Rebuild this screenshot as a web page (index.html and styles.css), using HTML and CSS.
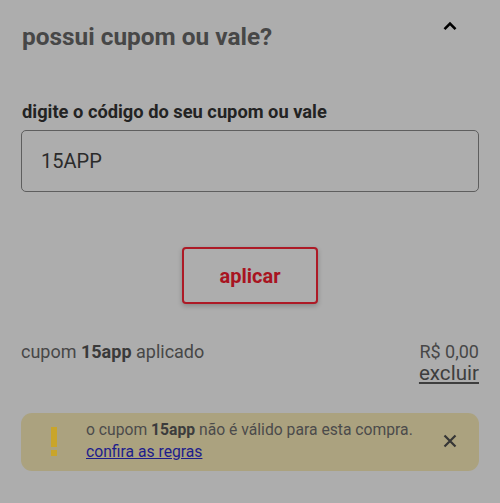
FILE: index.html
```html
<!DOCTYPE html>
<html lang="pt-BR">
<head>
<meta charset="utf-8">
<title>cupom</title>
<link rel="stylesheet" href="styles.css">
</head>
<body>
<div class="page">
  <div class="header">
    <h2 class="title">possui cupom ou vale?</h2>
    <svg class="chevron" width="14" height="10" viewBox="0 0 14 10"><polyline points="1.5,8.2 7,2.7 12.5,8.2" fill="none" stroke="#000" stroke-width="2.6"/></svg>
  </div>
  <label class="label" for="code">digite o código do seu cupom ou vale</label>
  <input class="field" id="code" type="text" value="15APP">
  <div class="btn-row">
    <button class="apply">aplicar</button>
  </div>
  <div class="applied">
    <div class="applied-text">cupom <b>15app</b> aplicado</div>
    <div class="applied-side">
      <div class="price">R$ 0,00</div>
      <a class="remove" href="#">excluir</a>
    </div>
  </div>
  <div class="alert">
    <svg class="bang" width="6" height="30" viewBox="0 0 6 30"><rect x="0" y="0" width="6" height="20" fill="#c9a52b"/><rect x="0" y="23" width="6" height="6" fill="#c9a52b"/></svg>
    <div class="alert-text">
      <div>o cupom <b>15app</b> não é válido para esta compra.</div>
      <a class="rules" href="#">confira as regras</a>
    </div>
    <svg class="close" width="14" height="14" viewBox="0 0 14 14"><path d="M1.5 1.5 L12.5 12.5 M12.5 1.5 L1.5 12.5" stroke="#363636" stroke-width="2.2" fill="none"/></svg>
  </div>
</div>
</body>
</html>
```
FILE: styles.css
```css
html, body {
  margin: 0;
  padding: 0;
  background: #adadad;
}
body {
  font-family: Roboto, "Liberation Sans", sans-serif;
  width: 500px;
  height: 503px;
  overflow: hidden;
}
.page {
  padding: 0 21px;
  display: flex;
  flex-direction: column;
}
.header {
  display: flex;
  justify-content: space-between;
  align-items: flex-start;
}
.title {
  margin: 23px 0 0 1px;
  font-size: 24.4px;
  line-height: 28px;
  font-weight: 700;
  color: #474747;
}
.chevron {
  margin-top: 21px;
  margin-right: 22px;
}
.label {
  margin-top: 51px;
  margin-left: 1px;
  font-size: 18.3px;
  line-height: 20px;
  font-weight: 700;
  color: #232323;
}
.field {
  margin-top: 8px;
  box-sizing: border-box;
  width: 100%;
  height: 62px;
  border: 1px solid #5e5e5e;
  border-radius: 5px;
  background: transparent;
  padding: 0 0 0 19px;
  font-family: Roboto, "Liberation Sans", sans-serif;
  font-size: 20px;
  color: #2b2b2b;
  outline: none;
}
.btn-row {
  display: flex;
  justify-content: center;
  margin-top: 55px;
}
.apply {
  box-sizing: border-box;
  width: 136px;
  height: 57px;
  border: 2px solid #ad1a26;
  border-radius: 4px;
  background: #adadad;
  box-shadow: 0 2px 5px rgba(0, 0, 0, 0.22);
  font-family: Roboto, "Liberation Sans", sans-serif;
  font-size: 20px;
  font-weight: 700;
  color: #a8141f;
  padding: 0;
}
.applied {
  margin-top: 37px;
  display: flex;
  justify-content: space-between;
  align-items: flex-start;
}
.applied-text {
  font-size: 18px;
  line-height: 22px;
  color: #474747;
}
.applied-text b {
  color: #3a3a3a;
}
.applied-side {
  display: flex;
  flex-direction: column;
  align-items: flex-end;
}
.price {
  font-size: 18px;
  line-height: 22px;
  color: #474747;
}
.remove {
  font-size: 20.6px;
  line-height: 21px;
  color: #3e3e3e;
  text-decoration: underline;
  text-underline-offset: 2px;
}
.alert {
  margin-top: 29px;
  display: flex;
  align-items: flex-start;
  background: #aba27f;
  border-radius: 11px;
  padding: 6px 0 8px 30px;
}
.bang {
  align-self: center;
  margin-top: 1px;
}
.alert-text {
  margin-left: 29px;
  font-size: 15.7px;
  line-height: 22px;
  color: #4b4b4b;
}
.alert-text b {
  color: #3c3c3c;
}
.rules {
  color: #1d1d8c;
  text-decoration: underline;
}
.close {
  align-self: center;
  margin-left: auto;
  margin-right: 22px;
}
```
